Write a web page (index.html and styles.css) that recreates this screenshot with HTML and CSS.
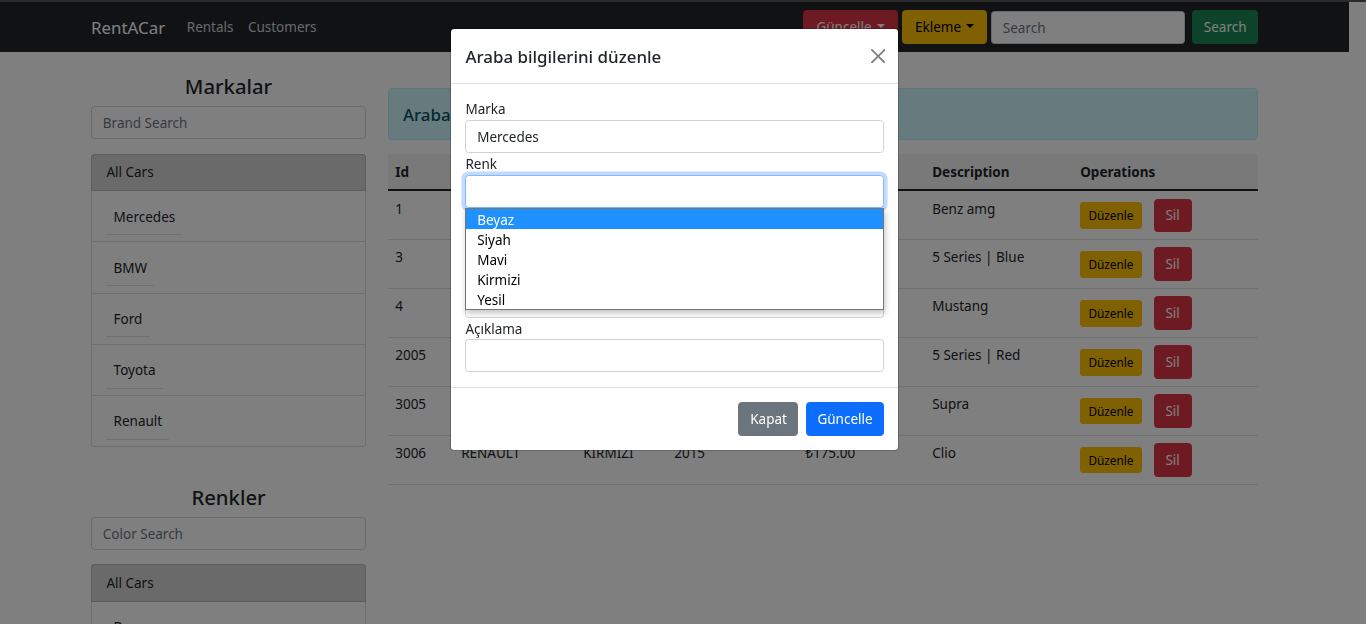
FILE: index.html
```html
<!DOCTYPE html>
<html lang="tr">
<head>
<meta charset="utf-8">
<title>RentACar</title>
<link rel="stylesheet" href="styles.css">
</head>
<body>
<nav class="navbar">
  <div class="container nav-inner">
    <a class="brand" href="#">RentACar</a>
    <ul class="nav-links">
      <li><a class="nav-link" href="#">Rentals</a></li>
      <li><a class="nav-link" href="#">Customers</a></li>
    </ul>
    <div class="nav-right">
      <button class="btn btn-danger btn-nav-update dropdown-toggle">Güncelle</button>
      <button class="btn btn-warning btn-nav-add dropdown-toggle">Ekleme</button>
      <input class="form-control nav-search" type="text" placeholder="Search">
      <button class="btn btn-success btn-nav-search">Search</button>
    </div>
  </div>
</nav>

<div class="container page">
  <div class="layout">
    <aside class="sidebar">
      <section class="side-section">
        <h3 class="side-title">Markalar</h3>
        <input class="form-control" type="text" placeholder="Brand Search">
        <ul class="list-group">
          <li class="lg-item active">All Cars</li>
          <li class="lg-item"><span class="lg-inner">Mercedes</span></li>
          <li class="lg-item"><span class="lg-inner">BMW</span></li>
          <li class="lg-item"><span class="lg-inner">Ford</span></li>
          <li class="lg-item"><span class="lg-inner">Toyota</span></li>
          <li class="lg-item"><span class="lg-inner">Renault</span></li>
        </ul>
      </section>
      <section class="side-section">
        <h3 class="side-title">Renkler</h3>
        <input class="form-control" type="text" placeholder="Color Search">
        <ul class="list-group">
          <li class="lg-item active">All Cars</li>
          <li class="lg-item"><span class="lg-inner">Beyaz</span></li>
          <li class="lg-item"><span class="lg-inner">Siyah</span></li>
          <li class="lg-item"><span class="lg-inner">Mavi</span></li>
          <li class="lg-item"><span class="lg-inner">Kirmizi</span></li>
          <li class="lg-item"><span class="lg-inner">Yesil</span></li>
        </ul>
      </section>
    </aside>

    <main class="main">
      <div class="alert">
        <h5 class="alert-title">Araba Listesi</h5>
      </div>
      <table class="table">
        <colgroup>
          <col class="c-id"><col class="c-brand"><col class="c-color"><col class="c-year"><col class="c-price"><col class="c-desc"><col class="c-ops">
        </colgroup>
        <thead>
          <tr><th>Id</th><th>Brand</th><th>Color</th><th>Model Year</th><th>Daily Price</th><th>Description</th><th>Operations</th></tr>
        </thead>
        <tbody>
          <tr><td>1</td><td class="up">Mercedes</td><td class="up">Beyaz</td><td>2020</td><td>₺250.00</td><td>Benz amg</td>
            <td><div class="ops"><button class="btn btn-sm btn-warning">Düzenle</button><button class="btn btn-danger">Sil</button></div></td></tr>
          <tr><td>3</td><td class="up">BMW</td><td class="up">Mavi</td><td>2019</td><td>₺200.00</td><td>5 Series | Blue</td>
            <td><div class="ops"><button class="btn btn-sm btn-warning">Düzenle</button><button class="btn btn-danger">Sil</button></div></td></tr>
          <tr><td>4</td><td class="up">Ford</td><td class="up">Siyah</td><td>2018</td><td>₺180.00</td><td>Mustang</td>
            <td><div class="ops"><button class="btn btn-sm btn-warning">Düzenle</button><button class="btn btn-danger">Sil</button></div></td></tr>
          <tr><td>2005</td><td class="up">BMW</td><td class="up">Kirmizi</td><td>2021</td><td>₺220.00</td><td>5 Series | Red</td>
            <td><div class="ops"><button class="btn btn-sm btn-warning">Düzenle</button><button class="btn btn-danger">Sil</button></div></td></tr>
          <tr><td>3005</td><td class="up">Toyota</td><td class="up">Beyaz</td><td>2017</td><td>₺300.00</td><td>Supra</td>
            <td><div class="ops"><button class="btn btn-sm btn-warning">Düzenle</button><button class="btn btn-danger">Sil</button></div></td></tr>
          <tr><td>3006</td><td class="up">Renault</td><td class="up">Kirmizi</td><td>2015</td><td>₺175.00</td><td>Clio</td>
            <td><div class="ops"><button class="btn btn-sm btn-warning">Düzenle</button><button class="btn btn-danger">Sil</button></div></td></tr>
        </tbody>
      </table>
    </main>
  </div>
</div>

<div class="modal-backdrop"></div>
<div class="modal">
  <div class="modal-dialog">
    <div class="modal-content">
      <div class="modal-header">
        <h5 class="modal-title">Araba bilgilerini düzenle</h5>
        <button class="btn-close" aria-label="Close">
          <svg width="14.4" height="14.4" viewBox="0 0 16 16"><path d="M.293.293a1 1 0 011.414 0L8 6.586 14.293.293a1 1 0 111.414 1.414L9.414 8l6.293 6.293a1 1 0 01-1.414 1.414L8 9.414l-6.293 6.293a1 1 0 01-1.414-1.414L6.586 8 .293 1.707a1 1 0 010-1.414z"/></svg>
        </button>
      </div>
      <div class="modal-body">
        <div class="field">
          <label class="form-label">Marka</label>
          <input class="form-control" type="text" value="Mercedes">
        </div>
        <div class="field">
          <label class="form-label">Renk</label>
          <input class="form-control focused" type="text">
          <ul class="datalist">
            <li class="dl-item selected">Beyaz</li>
            <li class="dl-item">Siyah</li>
            <li class="dl-item">Mavi</li>
            <li class="dl-item">Kirmizi</li>
            <li class="dl-item">Yesil</li>
          </ul>
        </div>
        <div class="field">
          <label class="form-label">Model Yılı</label>
          <input class="form-control" type="text" value="2020">
        </div>
        <div class="field">
          <label class="form-label">Günlük Fiyat</label>
          <input class="form-control" type="text" value="250">
        </div>
        <div class="field">
          <label class="form-label">Açıklama</label>
          <input class="form-control" type="text">
        </div>
      </div>
      <div class="modal-footer">
        <button class="btn btn-secondary btn-close-modal">Kapat</button>
        <button class="btn btn-primary btn-save">Güncelle</button>
      </div>
    </div>
  </div>
</div>
</body>
</html>
```

FILE: styles.css
```css
* { box-sizing: border-box; }

html {
  font-size: 14.4px;
  border-top: 2px solid #565656;
}

body {
  margin: 0;
  padding-right: 17px;
  height: 622px;
  overflow: hidden;
  background: #fff;
  color: #212529;
  font-family: "Noto Sans", "Open Sans", sans-serif;
  font-size: 13.5px;
  line-height: 21.6px;
}

ul { margin: 0; padding: 0; list-style: none; }
h3, h5 { margin: 0; }

.container {
  width: 1191px;
  margin: 0 auto;
  padding: 0 12px;
}

/* ---------- buttons / inputs ---------- */
.btn {
  display: inline-block;
  font-family: inherit;
  font-size: 13.5px;
  line-height: 21.6px;
  padding: 5.4px 10.8px 4.6px;
  border: 1px solid transparent;
  border-radius: 3.6px;
  text-align: center;
  white-space: nowrap;
  cursor: pointer;
}
.btn-sm {
  font-size: 11.8px;
  line-height: 18.9px;
  padding: 3.3px 7.2px 2.5px;
  border-radius: 2.9px;
}
.btn-danger { background: #dc3545; border-color: #dc3545; color: #fff; }
.btn-warning { background: #ffc107; border-color: #ffc107; color: #000; }
.btn-success { background: #198754; border-color: #198754; color: #fff; }
.btn-secondary { background: #6c757d; border-color: #6c757d; color: #fff; }
.btn-primary { background: #0d6efd; border-color: #0d6efd; color: #fff; }

.dropdown-toggle::after {
  content: "";
  display: inline-block;
  margin-left: 5px;
  vertical-align: 3.4px;
  border-top: 4.3px solid;
  border-right: 4.3px solid transparent;
  border-left: 4.3px solid transparent;
}

.form-control {
  display: block;
  width: 100%;
  height: 33.3px;
  padding: 5.4px 10.8px 4.6px;
  font-family: inherit;
  font-size: 13.5px;
  line-height: 21.6px;
  color: #212529;
  background: #fff;
  border: 1px solid #ced4da;
  border-radius: 3.6px;
}
.form-control::placeholder { color: #6c757d; }
.form-control.focused {
  border-color: #86b7fe;
  box-shadow: 0 0 0 3.6px rgba(13, 110, 253, .25);
  outline: 0;
}

/* ---------- navbar ---------- */
.navbar {
  background: #212529;
  padding: 7.2px 0;
}
.nav-inner {
  display: flex;
  align-items: center;
}
.brand {
  font-size: 16.9px;
  line-height: 27px;
  padding: 5.3px 0 3.7px;
  margin-right: 14.4px;
  color: #fff;
  text-decoration: none;
}
.nav-links { display: flex; }
.nav-link {
  display: block;
  padding: 8px 7.2px 6.4px;
  color: rgba(255, 255, 255, .8);
  text-decoration: none;
}
.nav-right {
  margin-left: auto;
  display: flex;
  align-items: center;
}
.nav-right .btn-nav-update { width: 95px; margin-right: 4px; }
.nav-right .btn-nav-add { width: 85px; margin-right: 4px; }
.nav-right .nav-search { width: 194px; margin-right: 7px; }
.nav-right .btn-nav-search { width: 66px; }

/* ---------- page layout ---------- */
.layout {
  display: grid;
  grid-template-columns: 275px 1fr;
  column-gap: 22px;
}
.sidebar {
  display: flex;
  flex-direction: column;
}
.side-section {
  display: flex;
  flex-direction: column;
  margin-top: 20.6px;
}
.side-section + .side-section { margin-top: 22px; }
.side-title {
  font-size: 20.3px;
  line-height: 25.9px;
  padding-top: 1px;
  font-weight: 500;
  text-align: center;
  margin-bottom: 6.2px;
}
.list-group { margin-top: 14.4px; margin-bottom: 14.4px; }
.lg-item {
  padding: 7.6px 14.4px 6.4px;
  border: 1px solid rgba(0, 0, 0, .125);
  border-top-width: 0;
  background: #fff;
}
.lg-item:first-child {
  border-top-width: 1px;
  border-radius: 3.6px 3.6px 0 0;
}
.lg-item:last-child { border-radius: 0 0 3.6px 3.6px; }
.lg-item.active { background: #d4d4d4; }
.lg-inner {
  display: block;
  width: fit-content;
  padding: 7.6px 7.2px 6px;
  border-bottom: 1px solid #dee2e6;
}

/* ---------- main ---------- */
.alert {
  margin-top: 36px;
  margin-bottom: 14.4px;
  padding: 14.6px 14px 13.4px;
  background: #cff4fc;
  border: 1px solid #b6effb;
  border-radius: 3.6px;
  color: #055160;
}
.alert-title {
  font-size: 16.9px;
  line-height: 21.6px;
  font-weight: 500;
}

.table {
  width: 100%;
  table-layout: fixed;
  border-collapse: separate;
  border-spacing: 0;
}
.c-id { width: 66px; }
.c-brand { width: 122px; }
.c-color { width: 91px; }
.c-year { width: 131px; }
.c-price { width: 127px; }
.c-desc { width: 148px; }
.c-ops { width: 185px; }

.table th, .table td {
  padding: 7.2px;
  text-align: left;
  vertical-align: top;
  border-bottom: 1px solid #dee2e6;
  white-space: nowrap;
  overflow: hidden;
}
.table th {
  padding-top: 7.4px;
  padding-bottom: 6px;
  font-weight: 700;
  background: #f2f2f2;
  border-bottom: 2px solid #212529;
}
.table .up { text-transform: uppercase; }
.ops {
  display: flex;
  align-items: center;
  gap: 12px;
}

/* ---------- modal ---------- */
.modal-backdrop {
  position: fixed;
  inset: 0;
  background: rgba(0, 0, 0, .5);
  z-index: 10;
}
.modal {
  position: fixed;
  inset: 0;
  padding-right: 17px;
  z-index: 20;
}
.modal-dialog {
  width: 449px;
  margin: 28px auto 0;
}
.modal-content {
  background: #fff;
  border: 1px solid rgba(0, 0, 0, .2);
  border-radius: 4.3px;
  background-clip: padding-box;
}
.modal-header {
  display: flex;
  align-items: center;
  justify-content: space-between;
  padding: 13.5px 14.4px;
  border-bottom: 1px solid #dee2e6;
}
.modal-title {
  font-size: 16.9px;
  line-height: 27px;
  font-weight: 500;
}
.btn-close {
  display: flex;
  padding: 7.2px;
  margin: -7.2px -8.8px -7.2px auto;
  background: transparent;
  border: 0;
  opacity: .5;
  cursor: pointer;
}
.btn-close svg { display: block; fill: #000; }

.modal-body { padding: 14.4px; }
.field { position: relative; }
.form-label {
  display: block;
  line-height: 21.5px;
  padding-top: 1px;
  margin-bottom: -1px;
}

.datalist {
  position: absolute;
  left: 0;
  right: 0;
  top: 100%;
  background: #fff;
  border: 1px solid #767676;
  box-shadow: 1px 3px 6px rgba(0, 0, 0, .25);
  z-index: 5;
}
.dl-item {
  height: 20px;
  line-height: 20px;
  padding-left: 10.8px;
  padding-top: 1px;
  color: #000;
}
.dl-item.selected {
  background: #1e90ff;
  color: #fff;
}

.modal-footer {
  display: flex;
  justify-content: flex-end;
  align-items: center;
  padding: 10.8px;
  border-top: 1px solid #dee2e6;
}
.modal-footer .btn { margin: 3.6px; }
.btn-close-modal { width: 60px; }
.btn-save { width: 78px; }
```
